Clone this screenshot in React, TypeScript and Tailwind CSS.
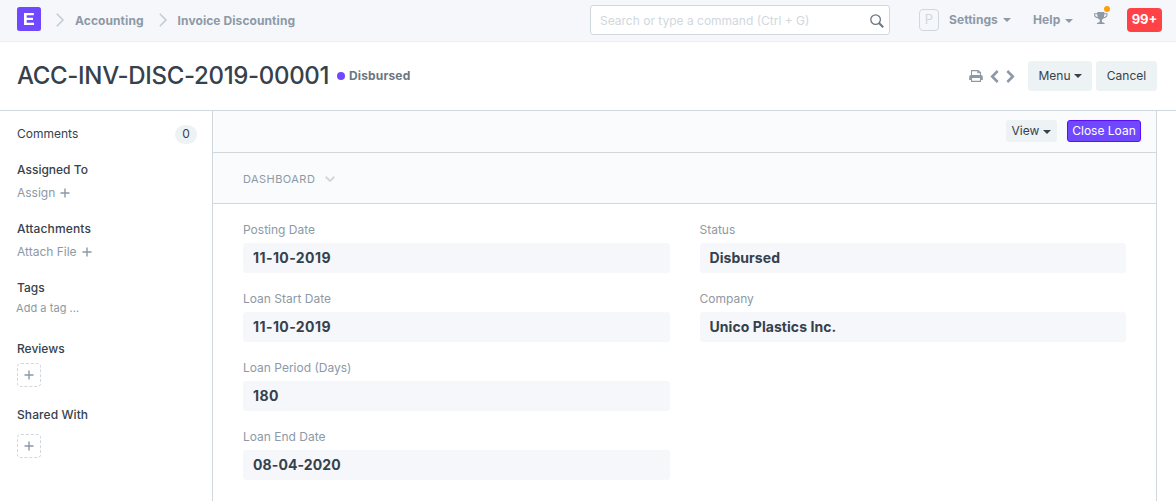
import type { ReactNode } from "react";

function Caret({ className = "" }: { className?: string }) {
  return (
    <svg viewBox="0 0 8 4" className={`h-[4px] w-[8px] shrink-0 ${className}`} fill="currentColor">
      <path d="M0 0h8L4 4z" />
    </svg>
  );
}

function Crumb({ children, className }: { children: ReactNode; className: string }) {
  return (
    <a className={`flex items-center font-bold tracking-[0.08px] text-[#8d99a6] ${className}`}>
      <svg viewBox="0 0 8 14" className="mr-[11px] h-[14px] w-[8px] shrink-0" fill="none" stroke="#c0cad2" strokeWidth="1.5">
        <path d="M.8.8 7 7 .8 13.2" />
      </svg>
      <span className="pt-px">{children}</span>
    </a>
  );
}

function Navbar() {
  return (
    <nav className="flex h-[42px] shrink-0 items-start border-b border-[#ebeff2] bg-[#f5f7fa] pl-[17px]">
      <svg viewBox="0 0 24 24" className="mt-[7px] h-6 w-6 shrink-0">
        <rect width="24" height="24" rx="2.5" fill="#7048ff" />
        <path d="M7 6h9.8v2.3H9.7v2.5h6.3V13H9.7v2.8h7.3V18H7z" fill="#fff" />
      </svg>
      <div className="flex h-[40px] w-[549px] items-center">
        <Crumb className="ml-[15px]">Accounting</Crumb>
        <Crumb className="ml-[15px]">Invoice Discounting</Crumb>
      </div>
      <div className="mt-[5px] flex h-[30px] w-[300px] items-center justify-between rounded-[3px] border border-[#d1d8dd] bg-white pr-[5px] pl-[9px] text-[#d1d8dd]">
        <span className="pt-px">Search or type a command (Ctrl + G)</span>
        <svg viewBox="0 0 14 14" className="mt-px h-[14px] w-[14px] shrink-0" fill="none" stroke="#6c7680">
          <circle cx="5.6" cy="5.6" r="4.8" strokeWidth="1.3" />
          <path d="m9 9 4.2 4.2" strokeWidth="2" />
        </svg>
      </div>
      <div className="mt-[9px] ml-[29px] flex h-[22px] w-[20px] items-center justify-center rounded-[4px] border border-[#d1d8dd] text-[13px] text-[#d1d8dd]">
        P
      </div>
      <div className="ml-[10px] flex h-[40px] w-[84px] items-center font-bold tracking-[0.06px] text-[#8d99a6]">
        Settings
        <Caret className="ml-[5px]" />
      </div>
      <div className="flex h-[40px] w-[61px] items-center font-bold tracking-[0.1px] text-[#8d99a6]">
        Help
        <Caret className="mt-[2px] ml-[5px]" />
      </div>
      <div className="relative mt-[12px] h-[13px] w-[14px] shrink-0">
        <svg viewBox="0 0 14 13" className="h-[13px] w-[14px]" fill="#8d99a6">
          <path d="M3.3 0h7v1.200H13.500v1.500c0 2-1.700 3.400-4.200 3.700-.5.7-1 1-1.400 1.300v1.700c0 .8.600 1 1.400 1.200.9.200 1.400.7 1.400 1.500H2.900c0-.8.5-1.300 1.400-1.500.8-.2 1.400-.4 1.400-1.200V7.700c-.4-.3-.9-.6-1.400-1.300C1.800 6.100.1 4.700.1 2.700V1.200h3.200zM3.300 2.200H1.100v.5c0 1.100 1 2.100 2.600 2.500-.3-.9-.4-1.900-.4-3zm7 0c0 1.100-.1 2.100-.4 3 1.600-.4 2.600-1.400 2.600-2.500v-.5z" />
        </svg>
        <span className="absolute -top-[6px] right-[-2px] h-[6px] w-[6px] rounded-full bg-[#ffa00a]" />
      </div>
      <div className="mt-[8px] ml-[19px] flex h-6 w-[35px] items-center justify-center rounded-[4px] bg-[#ff4246] text-[13px] font-bold text-white">
        99+
      </div>
    </nav>
  );
}

function PageHead() {
  return (
    <header className="flex h-[69px] shrink-0 items-center border-b border-[#d1d8dd] pl-[17px] text-[#36414c]">
      <h1 className="w-[320px] text-[24px] leading-[34px] font-medium tracking-[-0.33px] whitespace-nowrap">
        ACC-INV-DISC-2019-00001
      </h1>
      <span className="h-2 w-2 rounded-full bg-[#7048ff]" />
      <span className="ml-[4px] font-bold tracking-[0.15px] text-[#6c7680]">Disbursed</span>
      <div className="ml-auto flex items-center text-[#8d99a6]">
        <svg viewBox="0 0 14 12" className="h-[12px] w-[14px]" fill="none" stroke="currentColor">
          <path d="M2.500 6V.6h6.700L11.500 2.600V6M8.800 .6v2.200h2.500" strokeWidth="1.100" />
          <path d="M2 5h10a1.800 1.800 0 0 1 1.800 1.800V10H11.500V8h-9v2H.2V6.800A1.800 1.800 0 0 1 2 5z" fill="currentColor" stroke="none" />
          <path d="M2.500 8v3.400h9V8" strokeWidth="1.100" />
        </svg>
        <svg viewBox="0 0 9 13" className="ml-[7px] h-[13px] w-[9px]" fill="none" stroke="currentColor" strokeWidth="2.600">
          <path d="M7.700 1 2.200 6.500l5.500 5.500" />
        </svg>
        <svg viewBox="0 0 9 13" className="ml-[7px] h-[13px] w-[9px]" fill="none" stroke="currentColor" strokeWidth="2.600">
          <path d="m1.300 1 5.500 5.500L1.300 12" />
        </svg>
      </div>
      <button className="ml-[13px] flex h-[30px] w-[64px] items-center justify-center rounded-[3px] bg-[#edf2f5]">
        Menu
        <Caret className="ml-[3px]" />
      </button>
      <button className="mr-[19px] ml-[4px] h-[30px] w-[61px] rounded-[3px] bg-[#edf2f5]">Cancel</button>
    </header>
  );
}

function Plus() {
  return (
    <svg viewBox="0 0 10 10" className="h-[10px] w-[10px]" fill="none" stroke="#8d99a6" strokeWidth="1.400">
      <path d="M5 .5v9M.5 5h9" />
    </svg>
  );
}

function AddBox() {
  return (
    <button className="flex h-6 w-6 items-center justify-center rounded-[4px] border border-dashed border-[#d1d8dd]">
      <Plus />
    </button>
  );
}

function Sidebar() {
  return (
    <aside className="flex w-[212px] shrink-0 flex-col items-start pt-[13px] pl-[17px] leading-[20px] text-[#36414c]">
      <div className="flex h-[20px] w-[180px] items-center justify-between">
        Comments
        <span className="flex h-[19px] w-[22px] items-center justify-center rounded-full bg-[#edf2f5]">0</span>
      </div>
      <h2 className="mt-[16px] font-medium">Assigned To</h2>
      <a className="mt-[3px] flex items-center gap-[5px] text-[#8d99a6]">
        Assign <Plus />
      </a>
      <h2 className="mt-[16px] font-medium tracking-[0.14px]">Attachments</h2>
      <a className="mt-[3px] flex items-center gap-[5px] text-[#8d99a6]">
        Attach File <Plus />
      </a>
      <h2 className="mt-[16px] font-medium">Tags</h2>
      <span className="-ml-px text-[11px] tracking-[0.05px] text-[#8d99a6]">Add a tag ...</span>
      <h2 className="mt-[21px] mb-[4px] font-medium">Reviews</h2>
      <AddBox />
      <h2 className="mt-[18px] mb-[9px] font-medium tracking-[0.08px]">Shared With</h2>
      <AddBox />
    </aside>
  );
}

function Field({ label, value, tracking = "tracking-[0.06px]" }: { label: string; value: string; tracking?: string }) {
  return (
    <div className="h-[69px]">
      <label className="block h-[21px] leading-[16px] text-[#8d99a6]">{label}</label>
      <div
        className={`flex h-[30px] items-center rounded-[3px] bg-[#f5f7fa] px-[10px] pb-px text-[14px] font-bold text-[#36414c] ${tracking}`}
      >
        {value}
      </div>
    </div>
  );
}

export default function App() {
  return (
    <div className="flex h-[501px] w-[1176px] flex-col overflow-hidden bg-white font-['Inter','Liberation_Sans',sans-serif] text-[12px]">
      <Navbar />
      <PageHead />
      <div className="flex min-h-0 flex-1">
        <Sidebar />
        <main className="w-[945px] border-x border-[#d1d8dd] text-[#36414c]">
          <div className="flex h-[42px] items-center justify-end border-b border-[#d1d8dd] bg-[#fafbfc] pr-[15px] pb-px">
            <button className="flex h-[22px] w-[51px] items-center justify-center rounded-[3px] bg-[#edf2f5]">
              View
              <Caret className="mt-[2px] ml-[4px]" />
            </button>
            <button className="ml-[10px] h-[22px] w-[74px] rounded-[3px] border border-[#5b0eff] bg-[#7048ff] text-white">
              Close Loan
            </button>
          </div>
          <div className="flex h-[51px] items-center border-b border-[#d1d8dd] bg-[#fafbfc] pt-[2px] pl-[30px] text-[11px] tracking-[0.45px] text-[#8d99a6]">
            DASHBOARD
            <svg viewBox="0 0 10 6" className="ml-[10px] h-[6px] w-[10px]" fill="none" stroke="#d1d8dd" strokeWidth="2">
              <path d="m.7.7 4.300 4.300L9.300.7" />
            </svg>
          </div>
          <div className="grid grid-cols-2 gap-x-[30px] px-[30px] pt-[18px]">
            <div>
              <Field label="Posting Date" value="11-10-2019" tracking="tracking-[0.42px]" />
              <Field label="Loan Start Date" value="11-10-2019" tracking="tracking-[0.42px]" />
              <Field label="Loan Period (Days)" value="180" tracking="tracking-[0.4px]" />
              <Field label="Loan End Date" value="08-04-2020" tracking="tracking-[0.1px]" />
            </div>
            <div>
              <Field label="Status" value="Disbursed" />
              <Field label="Company" value="Unico Plastics Inc." />
            </div>
          </div>
        </main>
      </div>
    </div>
  );
}
